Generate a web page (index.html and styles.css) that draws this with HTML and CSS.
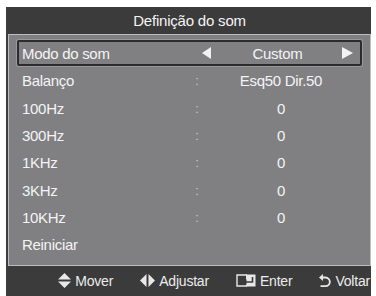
FILE: index.html
```html
<!DOCTYPE html>
<html lang="pt">
<head>
<meta charset="utf-8">
<title>Definição do som</title>
<link rel="stylesheet" href="styles.css">
</head>
<body>
<div class="panel">
  <div class="title">Definição do som</div>
  <div class="content">
    <div class="row selected">
      <span class="label">Modo do som</span>
      <span class="colon"></span>
      <span class="value picker">
        <svg class="arr" width="9" height="12" viewBox="0 0 9 12"><path d="M9 0 L0 6 L9 12 Z" fill="#f2f2f2"/></svg>
        <span class="pick-text">Custom</span>
        <svg class="arr" width="11" height="12" viewBox="0 0 11 12"><path d="M0 0 L11 6 L0 12 Z" fill="#f2f2f2"/></svg>
      </span>
    </div>
    <div class="row"><span class="label">Balanço</span><span class="colon">:</span><span class="value">Esq50 Dir.50</span></div>
    <div class="row"><span class="label">100Hz</span><span class="colon">:</span><span class="value">0</span></div>
    <div class="row"><span class="label">300Hz</span><span class="colon">:</span><span class="value">0</span></div>
    <div class="row"><span class="label">1KHz</span><span class="colon">:</span><span class="value">0</span></div>
    <div class="row"><span class="label">3KHz</span><span class="colon">:</span><span class="value">0</span></div>
    <div class="row"><span class="label">10KHz</span><span class="colon">:</span><span class="value">0</span></div>
    <div class="row"><span class="label">Reiniciar</span><span class="colon"></span><span class="value"></span></div>
  </div>
  <div class="footer">
    <span class="hint">
      <svg width="13" height="15" viewBox="0 0 13 15"><path d="M6.5 0 L13 6.5 L0 6.5 Z M0 8.5 L13 8.5 L6.5 15 Z" fill="#e8e8e8"/></svg>
      <span>Mover</span>
    </span>
    <span class="hint">
      <svg width="15" height="13" viewBox="0 0 15 13"><path d="M6.5 0 L6.5 13 L0 6.5 Z M8.5 0 L15 6.5 L8.5 13 Z" fill="#e8e8e8"/></svg>
      <span>Adjustar</span>
    </span>
    <span class="hint">
      <svg width="20" height="13" viewBox="0 0 20 13"><path d="M11 1 H1 V12 H11" fill="none" stroke="#e8e8e8" stroke-width="1.4"/><rect x="10" y="0.5" width="9.5" height="12" fill="#e8e8e8"/><path d="M16.5 3 V8 H9" fill="none" stroke="#3b3b3b" stroke-width="1.6"/><path d="M7 8 L10.5 5.3 L10.5 10.7 Z" fill="#3b3b3b"/></svg>
      <span>Enter</span>
    </span>
    <span class="hint">
      <svg width="12" height="14" viewBox="0 0 12 14"><path d="M3.5 3.5 H6.5 A4.3 4.3 0 0 1 6.5 12.2 H1.5" fill="none" stroke="#e8e8e8" stroke-width="1.8"/><path d="M0 3.5 L4 0 L4 7 Z" fill="#e8e8e8"/></svg>
      <span>Voltar</span>
    </span>
  </div>
</div>
</body>
</html>
```
FILE: styles.css
```css
* { box-sizing: border-box; }
html, body { margin: 0; padding: 0; background: #ffffff; }
body {
  font-family: "Liberation Sans", Arial, sans-serif;
  color: #f4f4f4;
  width: 376px;
  height: 296px;
  overflow: hidden;
}
.panel {
  margin: 7px 0 0 6px;
  width: 365px;
  height: 289px;
  background: #3b3b3b;
  padding-left: 2px;
  display: flex;
  flex-direction: column;
}
.title {
  height: 27px;
  line-height: 28px;
  text-align: center;
  font-size: 15px;
  letter-spacing: -0.2px;
  color: #f4f4f4;
}
.content {
  height: 232px;
  background: #808083;
  border: 1px solid #bdbdbf;
  padding: 5px 8px 0 8px;
}
.row {
  height: 27.3px;
  display: grid;
  grid-template-columns: 170px 10px 1fr;
  align-items: center;
  padding-left: 3px;
  border: 2px solid transparent;
  font-size: 15px;
  letter-spacing: -0.3px;
}
.row.selected {
  height: 26px;
  margin-bottom: 1.3px;
  border-color: #2c2c2e;
  border-radius: 2px;
  box-shadow: 0 0 0 1px #9a9a9d;
}
.colon {
  text-align: center;
  color: #c9c9cb;
  font-size: 13px;
}
.value {
  text-align: center;
}
.picker {
  display: grid;
  grid-template-columns: 9px 1fr 11px;
  align-items: center;
  padding-right: 7px;
}
.arr { display: block; }
.pick-text { text-align: center; padding-left: 2px; }
.footer {
  flex: 1;
  display: flex;
  justify-content: flex-end;
  align-items: center;
  gap: 27px;
  padding: 0 1px 1px 0;
  font-size: 14px;
  letter-spacing: -0.2px;
  color: #ececec;
}
.hint {
  display: flex;
  align-items: center;
  gap: 4px;
}
.hint svg { display: block; }
```
